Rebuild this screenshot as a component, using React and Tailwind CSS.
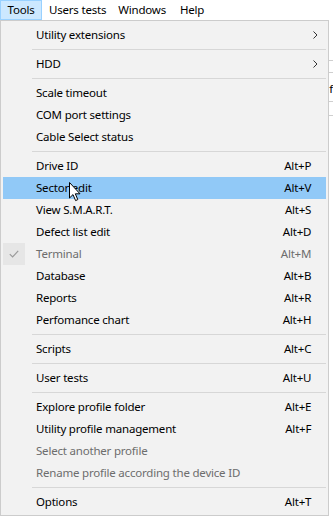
import React from "react";

const items = [
  { label: "Utility extensions", sub: true },
  { sep: true },
  { label: "HDD", sub: true },
  { sep: true },
  { label: "Scale timeout" },
  { label: "COM port settings" },
  { label: "Cable Select status" },
  { sep: true },
  { label: "Drive ID", key: "Alt+P" },
  { label: "Sector edit", key: "Alt+V", active: true },
  { label: "View S.M.A.R.T.", key: "Alt+S" },
  { label: "Defect list edit", key: "Alt+D" },
  { label: "Terminal", key: "Alt+M", disabled: true, checked: true },
  { label: "Database", key: "Alt+B" },
  { label: "Reports", key: "Alt+R" },
  { label: "Perfomance chart", key: "Alt+H" },
  { sep: true },
  { label: "Scripts", key: "Alt+C" },
  { sep: true },
  { label: "User tests", key: "Alt+U" },
  { sep: true },
  { label: "Explore profile folder", key: "Alt+E" },
  { label: "Utility profile management", key: "Alt+F" },
  { label: "Select another profile", disabled: true },
  { label: "Rename profile according the device ID", disabled: true },
  { sep: true },
  { label: "Options", key: "Alt+T" },
];

function Cursor() {
  return (
    <svg
      className="absolute left-[69px] top-[182px]"
      width="13"
      height="20"
      viewBox="0 0 13 20"
    >
      <path
        d="M0.5 0.5 L0.5 16 L4 12.6 L6.6 18.6 L8.8 17.6 L6.3 11.8 L11 11.8 Z"
        fill="#fff"
        stroke="#000"
        strokeWidth="1"
        strokeLinejoin="miter"
      />
    </svg>
  );
}

export default function App() {
  return (
    <div
      className="relative h-[518px] w-[333px] overflow-hidden bg-white text-[11.5px] tracking-[-0.2px] text-black"
      style={{ fontFamily: '"Noto Sans", "Open Sans", sans-serif' }}
    >
      {/* menu bar */}
      <div className="flex h-[20px] items-center">
        <div className="flex h-[20px] w-[42px] items-center justify-center border border-[#99d1ff] bg-[#cce8ff]">
          Tools
        </div>
        <div className="ml-[7px]">Users tests</div>
        <div className="ml-[12px]">Windows</div>
        <div className="ml-[14px]">Help</div>
      </div>

      <div className="flex">
        {/* dropdown */}
        <div className="h-[496px] w-[330px] border border-[#cccccc] bg-[#f2f2f2] px-[2px] pt-[3px]">
          {items.map((it, i) =>
            it.sep ? (
              <div key={i} className="flex h-[7px] items-center pl-[29px]">
                <div className="h-px w-full bg-[#d7d7d7]" />
              </div>
            ) : (
              <div
                key={i}
                className={
                  "flex h-[22px] items-center " +
                  (it.active ? "bg-[#91c9f7]" : "") +
                  (it.disabled ? " text-[#6d6d6d]" : "")
                }
              >
                <div className="flex w-[33px] shrink-0 items-center">
                  {it.checked && (
                    <div className="flex h-[22px] w-[22px] items-center justify-center bg-[#e6e6e6]">
                      <svg width="10" height="8" viewBox="0 0 10 8">
                        <path
                          d="M0.8 4.2 L3.6 7 L9.2 0.8"
                          fill="none"
                          stroke="#9a9a9a"
                          strokeWidth="1.2"
                        />
                      </svg>
                    </div>
                  )}
                </div>
                <div className="flex-1 whitespace-nowrap">{it.label}</div>
                {it.key && (
                  <div className="pr-[15px] whitespace-nowrap">{it.key}</div>
                )}
                {it.sub && (
                  <div className="pr-[8px]">
                    <svg width="5" height="8" viewBox="0 0 5 8">
                      <path d="M0.5 0.5 L4 4 L0.5 7.5" fill="none" stroke="#333" strokeWidth="1" />
                    </svg>
                  </div>
                )}
              </div>
            )
          )}
        </div>

        {/* window behind */}
        <div className="flex-1 bg-white">
          <div className="mt-[40px] h-px bg-[#cfcfcf]" />
          <div className="mt-[11px] h-px bg-[#cfcfcf]" />
          <div className="mt-[10px] leading-none">f</div>
          <div className="mt-[6px] h-px bg-[#cfcfcf]" />
          <div className="mt-[13px] h-px bg-[#cfcfcf]" />
        </div>
      </div>

      <Cursor />
    </div>
  );
}
